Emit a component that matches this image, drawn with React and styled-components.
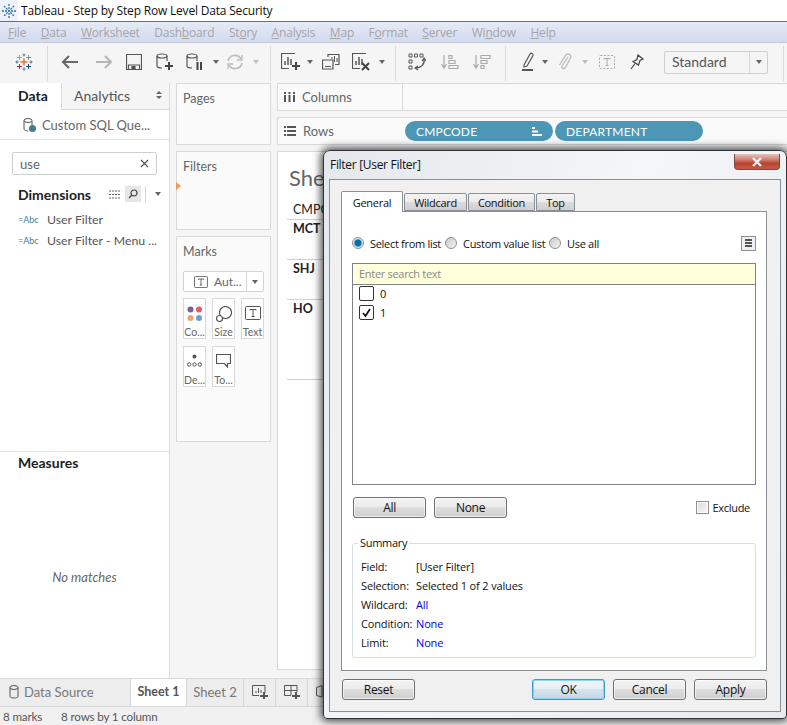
import React from "react";
import styled, { createGlobalStyle } from "styled-components";

const GlobalStyle = createGlobalStyle`
  html, body {
    margin: 0;
    padding: 0;
    background: #fff;
  }
  * {
    box-sizing: border-box;
  }
`;

const chrome = `"Lato", "Open Sans", sans-serif`;
const win = `"Open Sans", "Noto Sans", sans-serif`;

const Page = styled.div`
  position: relative;
  width: 787px;
  height: 725px;
  overflow: hidden;
  display: flex;
  flex-direction: column;
  background: #f5f5f5;
  font-family: ${chrome};
  font-size: 12px;
  color: #555;
`;

/* window title + menu */
const TitleBar = styled.div`
  height: 22px;
  flex: none;
  display: flex;
  align-items: center;
  gap: 3px;
  background: #fff;
  border-bottom: 1px solid #6f6f6f;
  font-family: ${win};
  font-size: 12px;
  letter-spacing: -0.19px;
  color: #111;
`;

const AppIcon = styled.div`
  width: 18px;
  height: 21px;
  display: flex;
  align-items: center;
  justify-content: center;
  background: #eef3f9;
`;

const MenuBar = styled.div`
  height: 21px;
  flex: none;
  display: flex;
  align-items: center;
  gap: 14.5px;
  padding: 1px 0 0 8px;
  background: linear-gradient(#e6eaf6, #d2daf0);
  border-bottom: 1px solid #c4c9d6;
  font-family: ${win};
  font-size: 12px;
  letter-spacing: -0.18px;
  color: #a5a5a5;

  u {
    text-underline-offset: 1px;
  }
`;

const Toolbar = styled.div`
  height: 40px;
  flex: none;
  display: flex;
  align-items: center;
  background: #f5f5f5;
`;

const Tool = styled.div`
  width: ${(p) => p.$w}px;
  height: 24px;
  flex: none;
  margin-top: -2px;
  display: flex;
  align-items: center;
  justify-content: center;
`;

const ToolSep = styled.div`
  width: 1px;
  height: 35px;
  flex: none;
  background: #d9d9d9;
`;

const Caret = styled.span`
  width: 0;
  height: 0;
  flex: none;
  border-left: 3.5px solid transparent;
  border-right: 3.5px solid transparent;
  border-top: 4px solid ${(p) => p.$color || "#666"};
`;

const ViewSelect = styled.div`
  width: 104px;
  height: 23px;
  flex: none;
  margin: -2px 0 0 14px;
  display: flex;
  align-items: center;
  border: 1px solid #cfcfcf;
  border-radius: 2px;
  font-size: 14px;
  color: #555;
`;

const ViewLabel = styled.span`
  flex: 1;
  padding: 0 0 1px 7px;
`;

const CaretBox = styled.span`
  width: ${(p) => p.$w || 18}px;
  height: 100%;
  display: flex;
  align-items: center;
  justify-content: center;
  border-left: 1px solid #d6d6d6;
`;

const Workspace = styled.div`
  flex: 1;
  min-height: 0;
  display: flex;
`;

/* left data pane */
const DataPane = styled.div`
  width: 170px;
  flex: none;
  display: flex;
  flex-direction: column;
  background: #fff;
  border-right: 1px solid #d9d9d9;
`;

const PaneTabs = styled.div`
  height: 27px;
  flex: none;
  display: flex;
`;

const DataTab = styled.div`
  width: 61px;
  padding: 4px 0 0 18px;
  font-size: 14px;
  font-weight: 700;
  color: #222;
`;

const AnalyticsTab = styled.div`
  flex: 1;
  display: flex;
  align-items: center;
  justify-content: space-between;
  padding: 0 7px 2px 12px;
  background: #f5f5f5;
  border-left: 1px solid #d9d9d9;
  border-bottom: 1px solid #d9d9d9;
  font-size: 14px;
  color: #555;
`;

const UpDown = styled.span`
  display: flex;
  flex-direction: column;
  gap: 2px;

  &::before,
  &::after {
    content: "";
    border-left: 3px solid transparent;
    border-right: 3px solid transparent;
  }
  &::before {
    border-bottom: 3px solid #666;
  }
  &::after {
    border-top: 3px solid #666;
  }
`;

const SourceRow = styled.div`
  height: 30px;
  flex: none;
  display: flex;
  align-items: center;
  gap: 6px;
  padding-left: 23px;
  border-bottom: 1px solid #e3e3e3;
  font-size: 13px;
  color: #666;
`;

const SearchBox = styled.div`
  height: 23px;
  flex: none;
  margin: 12px 12px 0;
  padding: 0 7px;
  display: flex;
  align-items: center;
  justify-content: space-between;
  border: 1px solid #cfcfcf;
  border-radius: 2px;
  font-size: 13px;
  color: #666;
`;

const DimHeader = styled.div`
  height: 22px;
  flex: none;
  margin: 8px 0 4px;
  padding-left: 18px;
  display: flex;
  align-items: center;
  font-size: 14px;
  font-weight: 700;
  color: #222;
`;

const DimTools = styled.div`
  margin-left: auto;
  display: flex;
  align-items: center;
  gap: 4px;
  padding-right: 8px;
`;

const DimButton = styled.span`
  width: 16px;
  height: 16px;
  display: flex;
  align-items: center;
  justify-content: center;
  background: ${(p) => (p.$active ? "#e6e6e6" : "transparent")};
`;

const DimSep = styled.span`
  width: 1px;
  height: 17px;
  margin: 0 5px 0 0;
  background: #d5d5d5;
`;

const FieldRow = styled.div`
  height: 21px;
  flex: none;
  display: flex;
  align-items: center;
  padding-left: 18px;
  white-space: nowrap;
  font-size: 12.3px;
  color: #555;
`;

const FieldType = styled.span`
  width: 29px;
  flex: none;
  font-size: 9px;
  color: #3e7d92;
`;

const MeasuresPane = styled.div`
  flex: 1;
  margin-top: 200px;
  display: flex;
  flex-direction: column;
  border-top: 1px solid #e3e3e3;
  padding-top: 2px;
`;

const MeasuresTitle = styled.div`
  padding-left: 18px;
  font-size: 14px;
  font-weight: 700;
  color: #222;
`;

const NoMatches = styled.div`
  margin-top: 98px;
  text-align: center;
  font-style: italic;
  font-size: 13px;
  color: #666;
`;

/* pages / filters / marks */
const CardColumn = styled.div`
  width: 107px;
  flex: none;
  display: flex;
  flex-direction: column;
  gap: 6px;
  padding: 0 6px;
`;

const Card = styled.div`
  height: ${(p) => p.$h}px;
  flex: none;
  position: relative;
  padding: 7px 6px;
  background: #fafafa;
  border: 1px solid #d9d9d9;
  font-size: 12.5px;
  color: #666;
`;

const DropMarker = styled.span`
  position: absolute;
  left: -1px;
  top: 30px;
  border-left: 5px solid #ea9a5c;
  border-top: 4px solid transparent;
  border-bottom: 4px solid transparent;
`;

const MarkSelect = styled.div`
  height: 21px;
  margin-top: 12px;
  display: flex;
  align-items: center;
  background: #fff;
  border: 1px solid #d4d4d4;
  border-radius: 2px;
  font-size: 12px;
  color: #666;
`;

const MarkLabel = styled.span`
  flex: 1;
  display: flex;
  align-items: center;
  gap: 6px;
  padding-left: 10px;
`;

const MarkGrid = styled.div`
  margin-top: 6px;
  display: grid;
  grid-template-columns: repeat(3, 23px);
  grid-auto-rows: 41px;
  gap: 7px 6px;
`;

const MarkTile = styled.div`
  display: flex;
  flex-direction: column;
  align-items: center;
  justify-content: space-between;
  padding: 7px 0 0;
  background: #fff;
  border: 1px solid #d9d9d9;
  font-size: 10.5px;
  color: #666;
`;

/* shelves + view */
const ViewColumn = styled.div`
  flex: 1;
  min-width: 0;
  display: flex;
  flex-direction: column;
  gap: 6px;
  padding-bottom: 8px;
`;

const Shelf = styled.div`
  height: 28px;
  flex: none;
  display: flex;
  align-items: center;
  background: #fafafa;
  border: 1px solid #d9d9d9;
  border-right: 0;
`;

const ShelfLabel = styled.div`
  width: 125px;
  height: 100%;
  flex: none;
  display: flex;
  align-items: center;
  gap: 7px;
  padding: 0 0 1px 6px;
  font-size: 13px;
  color: #666;
  border-right: ${(p) => (p.$split ? "1px solid #d9d9d9" : "0")};
`;

const Pill = styled.div`
  width: ${(p) => p.$w}px;
  height: 20px;
  flex: none;
  margin-right: 2px;
  display: flex;
  align-items: center;
  justify-content: space-between;
  padding: 0 11px;
  background: #4b97b5;
  border-radius: 10px;
  font-size: 12px;
  letter-spacing: 0.2px;
  color: #fff;
`;

const Pills = styled.div`
  display: flex;
  margin-left: 2px;
`;

const Sheet = styled.div`
  flex: 1;
  padding: 12px 0 0 9px;
  background: #fff;
  border: 1px solid #d9d9d9;
  border-right: 0;
`;

const SheetTitle = styled.div`
  height: 27px;
  padding-left: 2px;
  font-size: 22px;
  color: #666;
`;

const SheetRow = styled.div`
  height: ${(p) => p.$h}px;
  padding: ${(p) => (p.$head ? "11px" : "1px")} 0 0 6px;
  border-bottom: 1px solid #cfcfcf;
  font-size: 12.5px;
  font-weight: ${(p) => (p.$head ? 400 : 700)};
  color: #222;
`;

/* bottom tabs */
const TabStrip = styled.div`
  height: 29px;
  flex: none;
  display: flex;
  background: #ededed;
  border-top: 1px solid #d9d9d9;
  border-bottom: 1px solid #d9d9d9;
`;

const SheetTab = styled.div`
  width: ${(p) => p.$w}px;
  flex: none;
  display: flex;
  align-items: center;
  justify-content: ${(p) => (p.$left ? "flex-start" : "center")};
  gap: 5px;
  padding: 0 0 2px ${(p) => (p.$left ? "9px" : 0)};
  background: ${(p) => (p.$active ? "#fff" : "transparent")};
  border-right: 1px solid #d4d4d4;
  font-size: ${(p) => (p.$active ? 12.5 : 13)}px;
  font-weight: ${(p) => (p.$active ? 700 : 400)};
  color: ${(p) => (p.$active ? "#555" : "#777")};
`;

const StatusBar = styled.div`
  height: 18px;
  flex: none;
  display: flex;
  align-items: center;
  gap: 19px;
  padding: 1px 0 0 3px;
  background: #f0f0f0;
  font-size: 11.6px;
  letter-spacing: -0.15px;
  color: #555;
`;

/* filter dialog, floats over the workbook */
const Dialog = styled.div`
  position: absolute;
  left: 323px;
  top: 150px;
  width: 464px;
  height: 569px;
  padding: 28px 5px 6px;
  display: flex;
  flex-direction: column;
  background: linear-gradient(115deg, #e4e8ec, #f4f6f8 45%, #e7ebee);
  border: 1px solid #2f3338;
  border-radius: 7px 7px 4px 4px;
  box-shadow: 0 0 9px 2px rgba(0, 0, 0, 0.75);
  font-family: ${win};
  font-size: 11px;
  letter-spacing: -0.3px;
  color: #111;
`;

const DialogTitle = styled.div`
  position: absolute;
  left: 6px;
  top: 5px;
  font-size: 12px;
`;

const CloseButton = styled.div`
  position: absolute;
  right: 6px;
  top: 3px;
  width: 46px;
  height: 16px;
  display: flex;
  align-items: center;
  justify-content: center;
  background: linear-gradient(#e3c4bf, #d07a6c 40%, #b8432f 62%, #c65b4b);
  border: 1px solid #7a4a44;
  border-top: 0;
  border-radius: 0 0 4px 4px;
`;

const DialogBody = styled.div`
  flex: 1;
  min-height: 0;
  padding: 11px 13px 0 11px;
  display: flex;
  flex-direction: column;
  background: #f0f0f0;
  border: 1px solid #8b9097;
`;

const TabRow = styled.div`
  height: 20px;
  flex: none;
  display: flex;
  align-items: flex-end;
  gap: 1px;
  position: relative;
  z-index: 1;
`;

const DlgTab = styled.div`
  width: ${(p) => p.$w}px;
  height: ${(p) => (p.$active ? 21 : 18)}px;
  margin-bottom: ${(p) => (p.$active ? -1 : 0)}px;
  display: flex;
  align-items: center;
  justify-content: center;
  background: ${(p) =>
    p.$active ? "#fff" : "linear-gradient(#f3f3f3, #ebebeb 50%, #dcdcdc 50%, #cfcfcf)"};
  border: 1px solid #8b9097;
  border-bottom: ${(p) => (p.$active ? "0" : "1px solid #8b9097")};
  border-radius: 2px 2px 0 0;
`;

const TabPanel = styled.div`
  height: 460px;
  flex: none;
  padding: 23px 10px 0;
  background: #fff;
  border: 1px solid #8b9097;
`;

const RadioRow = styled.div`
  height: 16px;
  display: flex;
  align-items: center;
`;

const RadioOption = styled.label`
  width: ${(p) => p.$w}px;
  flex: none;
  display: flex;
  align-items: center;
  gap: 6px;
  white-space: nowrap;
`;

const RadioDot = styled.span`
  width: 12px;
  height: 12px;
  flex: none;
  border-radius: 50%;
  border: 1px solid #8e8f8f;
  background: ${(p) =>
    p.$on
      ? "radial-gradient(circle, #0a6fa8 0 3px, #9fd0ea 4px, #f0f0f0 5px)"
      : "linear-gradient(135deg, #c9c9c9, #f4f4f4)"};
`;

const MenuBtn = styled.div`
  width: 15px;
  height: 15px;
  margin-left: auto;
  display: flex;
  flex-direction: column;
  align-items: center;
  justify-content: center;
  gap: 1px;
  background: #f0f0f0;
  border: 1px solid #8b9097;

  span {
    width: 7px;
    height: 2px;
    background: #555;
  }
`;

const ValueList = styled.div`
  height: 222px;
  margin-top: 12px;
  border: 1px solid #7f8388;
`;

const ListSearch = styled.div`
  height: 21px;
  padding: 0 6px 1px;
  display: flex;
  align-items: center;
  background: #ffffdc;
  border-bottom: 1px solid #7f8388;
  color: #888;
`;

const ListItem = styled.div`
  height: 19px;
  display: flex;
  align-items: flex-start;
  gap: 6px;
  padding-left: 6px;
  line-height: 15px;
`;

const ListChecks = styled.div`
  padding-top: 1px;
`;

const CheckBox = styled.span`
  width: 15px;
  height: 15px;
  flex: none;
  display: flex;
  align-items: center;
  justify-content: center;
  background: #fff;
  border: 1px solid #333;
  border-radius: 2px;
`;

const ButtonRow = styled.div`
  display: flex;
  align-items: center;
  gap: 8px;
  margin-top: ${(p) => p.$mt || 0}px;
  padding-left: ${(p) => p.$pl || 0}px;
`;

const DlgButton = styled.div`
  width: 73px;
  height: 21px;
  flex: none;
  display: flex;
  align-items: center;
  justify-content: center;
  font-size: 12px;
  background: ${(p) =>
    p.$primary
      ? "linear-gradient(#f0f7fb, #e6eff5 50%, #d4e2ec 50%, #c6d8e6)"
      : "linear-gradient(#f3f3f3, #ebebeb 50%, #dddddd 50%, #cfcfcf)"};
  border: 1px solid ${(p) => (p.$primary ? "#3c9ad0" : "#707070")};
  border-radius: 3px;
  box-shadow: inset 0 0 0 1px ${(p) => (p.$primary ? "#8fd3f2" : "rgba(255, 255, 255, 0.6)")};
`;

const ExcludeOption = styled.div`
  margin-left: auto;
  margin-right: 6px;
  display: flex;
  align-items: center;
  gap: 4px;
`;

const ExcludeBox = styled.span`
  width: 13px;
  height: 13px;
  background: linear-gradient(135deg, #dcdcdc, #f8f8f8);
  border: 1px solid #8e8f8f;
  box-shadow: inset 0 0 0 1px #fff;
`;

const Summary = styled.fieldset`
  height: 121px;
  margin: 19px 0 0;
  padding: 8px 0 0 8px;
  border: 1px solid #d5dfe5;
  border-radius: 3px;
  min-width: 0;

  legend {
    margin-left: -3px;
    padding: 0 2px;
    line-height: 12px;
  }
`;

const SummaryRow = styled.div`
  height: 19px;
  display: flex;
  align-items: center;
  letter-spacing: -0.15px;
`;

const SummaryKey = styled.span`
  width: 55px;
  flex: none;
`;

const SummaryValue = styled.span`
  color: ${(p) => (p.$link ? "#0000ee" : "#111")};
`;

const DialogFoot = styled.div`
  flex: 1;
  display: flex;
  align-items: center;
  gap: 8px;
  padding: 0 0 3px 1px;
`;

const FootSpacer = styled.div`
  flex: 1;
`;

const Ic = ({ w = 20, h = 20, children }) => (
  <svg width={w} height={h} viewBox={`0 0 ${w} ${h}`} fill="none" stroke="#555" strokeWidth="1.2">
    {children}
  </svg>
);

const Cross = ({ x, y, s, c, sw = 1 }) => (
  <path d={`M${x - s} ${y}H${x + s}M${x} ${y - s}V${y + s}`} stroke={c} strokeWidth={sw} />
);

const SnowIcon = () => (
  <Ic w={14} h={14}>
    <path
      d="M7 0V14M0 7H14M2 2L12 12M12 2L2 12"
      stroke="#2f72a8"
      strokeWidth="1.3"
      strokeDasharray="2 1"
    />
  </Ic>
);

const TableauLogo = () => (
  <Ic w={18} h={18}>
    <Cross x={9} y={9} s={3.5} c="#e8762b" sw={1.5} />
    <Cross x={9} y={2} s={1.5} c="#59879b" />
    <Cross x={9} y={16} s={1.5} c="#4e79a7" />
    <Cross x={2} y={9} s={1.5} c="#5b6591" />
    <Cross x={16} y={9} s={1.5} c="#5b6591" />
    <Cross x={4.5} y={4.5} s={2.5} c="#eb912b" />
    <Cross x={13.5} y={4.5} s={2.5} c="#7099a6" />
    <Cross x={4.5} y={13.5} s={2.5} c="#c72035" />
    <Cross x={13.5} y={13.5} s={2.5} c="#1f447e" />
  </Ic>
);

const Arrow = ({ flip, color }) => (
  <svg width="18" height="16" viewBox="0 0 18 16" fill="none" stroke={color} strokeWidth="2">
    <path d={flip ? "M1 8H16M10 2L16 8L10 14" : "M17 8H2M8 2L2 8L8 14"} />
  </svg>
);

const SaveIcon = () => (
  <Ic w={16} h={16}>
    <path d="M.5.5H15.5V15.5H.5Z" />
    <path d="M2.5 15V11H13.5V15" />
    <path d="M6 15V12.5H9V15Z" fill="#555" />
  </Ic>
);

const Cylinder = ({ children }) => (
  <Ic w={18} h={18}>
    <ellipse cx="6" cy="3" rx="5" ry="2" />
    <path d="M1 3V13C1 14.5 3 15 6 15M11 3V8" />
    {children}
  </Ic>
);

const PlusMark = ({ x = 13, y = 13, s = 4 }) => (
  <path d={`M${x - s} ${y}H${x + s}M${x} ${y - s}V${y + s}`} stroke="#444" strokeWidth="2" />
);

const RefreshIcon = () => (
  <Ic w={18} h={18}>
    <path d="M2 8A7 7 0 0 1 15 6M16 10A7 7 0 0 1 3 12" stroke="#bdbdbd" strokeWidth="1.6" />
    <path d="M16 2V7H11M2 16V11H7" stroke="#bdbdbd" strokeWidth="1.4" />
  </Ic>
);

const ChartBox = ({ children }) => (
  <Ic w={20} h={18}>
    <path d="M14 .5H.5V15.5H8" />
    <path d="M4 12V8M7 12V4M10 12V6" strokeWidth="1.5" />
    {children}
  </Ic>
);

const DuplicateIcon = () => (
  <Ic w={18} h={16}>
    <path d="M6 3V.5H17V10.5H13" />
    <path d="M.5 6H11V15H.5Z" fill="#f5f5f5" />
    <path d="M10 5V3M12.5 8V2M15 8V4" strokeWidth="1" />
    <path d="M3 12.5H9" strokeWidth="1" />
  </Ic>
);

const SwapIcon = () => (
  <Ic w={18} h={18}>
    <path d="M1 1H4V4H1ZM6.5 1H9.5V4H6.5ZM12 1H15V4H12ZM1 7H4V10H1ZM1 13H4V16H1Z" strokeWidth="1" />
    <path d="M16 6C17 11 13 15 8 15" strokeWidth="1.4" />
    <path d="M14 8L16 5L18 8M10 13L7 15L10 17" strokeWidth="1.2" />
  </Ic>
);

const SortIcon = ({ desc }) => (
  <svg width="18" height="16" viewBox="0 0 18 16" fill="none" stroke="#aaa" strokeWidth="1.2">
    <path d="M3 1V13M.5 10L3 14L5.5 10" />
    {desc ? (
      <path d="M8 1.5H17V4.5H8ZM8 6.5H14V9.5H8ZM8 11.5H11V14.5H8Z" />
    ) : (
      <path d="M8 1.5H11V4.5H8ZM8 6.5H14V9.5H8ZM8 11.5H17V14.5H8Z" />
    )}
  </svg>
);

const HighlightIcon = () => (
  <Ic w={14} h={20}>
    <path d="M3 13L9 2C10 .5 12.5 1.5 12 3.5L6 14L3 15Z" />
    <path d="M1 18H12" stroke="#555" strokeWidth="2" />
  </Ic>
);

const ClipIcon = () => (
  <svg width="14" height="18" viewBox="0 0 14 18" fill="none" stroke="#bbb" strokeWidth="1.3">
    <path d="M10 4L4 13C3 15.5 6 16.5 7.5 14.5L12.5 5C14 1.5 9.5 -.5 7.5 2.5L1.5 12" />
  </svg>
);

const TextIcon = ({ dashed, size = 16, color = "#555" }) => (
  <svg width={size} height={size - 2} viewBox="0 0 16 14" fill="none" stroke={color}>
    <rect x=".5" y=".5" width="15" height="13" rx="1" strokeDasharray={dashed ? "2 1.5" : "none"} />
    <path d="M5 4.5V3.5H11V4.5M8 3.5V10.5M6.5 10.5H9.5" />
  </svg>
);

const PinIcon = () => (
  <Ic w={14} h={16}>
    <path d="M8 1L13 5L10 6.5L8.5 11L3 7.5L7 5.5Z" stroke="#444" />
    <path d="M5 9.5L1 15" stroke="#444" />
  </Ic>
);

const TipIcon = () => (
  <Ic w={15} h={14}>
    <path d="M.5.5H14.5V9.5H11.5V13L8.5 9.5H.5Z" />
  </Ic>
);

const ColorDots = () => (
  <svg width="16" height="16" viewBox="0 0 16 16">
    <circle cx="3.5" cy="3.5" r="3" fill="#7b5f94" />
    <circle cx="12" cy="3.5" r="3" fill="#e8586d" />
    <circle cx="3.5" cy="12" r="3" fill="#eda36f" />
    <circle cx="12" cy="12" r="3" fill="#6f9fd0" />
  </svg>
);

const SizeIcon = () => (
  <Ic w={16} h={16}>
    <circle cx="9.5" cy="6.5" r="6" />
    <circle cx="3.5" cy="12.5" r="3" fill="#fff" />
  </Ic>
);

const DetailIcon = () => (
  <Ic w={15} h={14}>
    <circle cx="7.5" cy="2.5" r="2" fill="#555" stroke="none" />
    <circle cx="2.2" cy="10.5" r="1.7" strokeWidth="1" />
    <circle cx="7.5" cy="10.5" r="1.7" strokeWidth="1" />
    <circle cx="12.8" cy="10.5" r="1.7" strokeWidth="1" />
  </Ic>
);

const ToolbarRow = () => (
  <Toolbar>
    <Tool $w={47}><TableauLogo /></Tool>
    <ToolSep />
    <Tool $w={44}><Arrow color="#666" /></Tool>
    <Tool $w={24}><Arrow flip color="#b5b5b5" /></Tool>
    <Tool $w={36}><SaveIcon /></Tool>
    <Tool $w={26}><Cylinder><PlusMark /></Cylinder></Tool>
    <Tool $w={34}>
      <Cylinder>
        <path d="M11.5 9V17M15 9V17" stroke="#444" strokeWidth="2" />
      </Cylinder>
    </Tool>
    <Tool $w={8}><Caret /></Tool>
    <Tool $w={30}><RefreshIcon /></Tool>
    <Tool $w={12}><Caret $color="#bbb" /></Tool>
    <Tool $w={8} />
    <ToolSep />
    <Tool $w={3} />
    <Tool $w={34}><ChartBox><PlusMark x={15} y={13} /></ChartBox></Tool>
    <Tool $w={4}><Caret /></Tool>
    <Tool $w={38}><DuplicateIcon /></Tool>
    <Tool $w={24}>
      <ChartBox>
        <path d="M10 10L17 17M17 10L10 17" stroke="#444" strokeWidth="2" />
      </ChartBox>
    </Tool>
    <Tool $w={16}><Caret /></Tool>
    <Tool $w={5} />
    <ToolSep />
    <Tool $w={42}><SwapIcon /></Tool>
    <Tool $w={24}><SortIcon /></Tool>
    <Tool $w={40}><SortIcon desc /></Tool>
    <Tool $w={3} />
    <ToolSep />
    <Tool $w={10} />
    <Tool $w={24}><HighlightIcon /></Tool>
    <Tool $w={10}><Caret /></Tool>
    <Tool $w={30}><ClipIcon /></Tool>
    <Tool $w={10}><Caret $color="#bbb" /></Tool>
    <Tool $w={34}><TextIcon dashed color="#aaa" /></Tool>
    <Tool $w={26}><PinIcon /></Tool>
    <ViewSelect>
      <ViewLabel>Standard</ViewLabel>
      <CaretBox><Caret /></CaretBox>
    </ViewSelect>
    <Tool $w={15} />
    <ToolSep />
  </Toolbar>
);

const menus = [
  ["F", "ile"],
  ["D", "ata"],
  ["W", "orksheet"],
  ["Dash", "b", "oard"],
  ["St", "o", "ry"],
  ["A", "nalysis"],
  ["M", "ap"],
  ["F", "o", "rmat"],
  ["S", "erver"],
  ["Wi", "n", "dow"],
  ["H", "elp"],
];

const MenuItem = ({ parts }) =>
  parts.length === 2 ? (
    <span>
      <u>{parts[0]}</u>
      {parts[1]}
    </span>
  ) : (
    <span>
      {parts[0]}
      <u>{parts[1]}</u>
      {parts[2]}
    </span>
  );

const DataPaneView = () => (
  <DataPane>
    <PaneTabs>
      <DataTab>Data</DataTab>
      <AnalyticsTab>
        Analytics
        <UpDown />
      </AnalyticsTab>
    </PaneTabs>
    <SourceRow>
      <Ic w={13} h={14}>
        <ellipse cx="5" cy="2.5" rx="4" ry="2" strokeWidth="1" />
        <path d="M1 2.5V11C1 12 3 13 5 13M9 3V7" strokeWidth="1" />
        <circle cx="9.5" cy="10.5" r="3.5" fill="#3e7d92" stroke="none" />
      </Ic>
      Custom SQL Que...
    </SourceRow>
    <SearchBox>
      use
      <svg width="9" height="9" viewBox="0 0 9 9" stroke="#555" strokeWidth="1.2">
        <path d="M1 1L8 8M8 1L1 8" />
      </svg>
    </SearchBox>
    <DimHeader>
      Dimensions
      <DimTools>
        <svg width="12" height="9" viewBox="0 0 12 9" stroke="#666" strokeDasharray="2 1">
          <path d="M0 1H12M0 4.5H12M0 8H12" />
        </svg>
        <DimButton $active>
          <svg width="10" height="10" viewBox="0 0 10 10" fill="none" stroke="#444" strokeWidth="1.2">
            <circle cx="6" cy="4" r="3" />
            <path d="M4 6L1 9" />
          </svg>
        </DimButton>
        <DimSep />
        <Caret />
      </DimTools>
    </DimHeader>
    <FieldRow>
      <FieldType>=Abc</FieldType>User Filter
    </FieldRow>
    <FieldRow>
      <FieldType>=Abc</FieldType>User Filter - Menu ...
    </FieldRow>
    <MeasuresPane>
      <MeasuresTitle>Measures</MeasuresTitle>
      <NoMatches>No matches</NoMatches>
    </MeasuresPane>
  </DataPane>
);

const MarksCard = () => (
  <Card $h={206}>
    Marks
    <MarkSelect>
      <MarkLabel>
        <TextIcon size={14} />
        Aut...
      </MarkLabel>
      <CaretBox $w={17}><Caret /></CaretBox>
    </MarkSelect>
    <MarkGrid>
      <MarkTile><ColorDots />Co...</MarkTile>
      <MarkTile><SizeIcon />Size</MarkTile>
      <MarkTile><TextIcon />Text</MarkTile>
      <MarkTile><DetailIcon />De...</MarkTile>
      <MarkTile><TipIcon />To...</MarkTile>
    </MarkGrid>
  </Card>
);

const FilterDialog = () => (
  <Dialog>
    <DialogTitle>Filter [User Filter]</DialogTitle>
    <CloseButton>
      <svg width="12" height="10" viewBox="0 0 12 10" stroke="#f4f4f4" strokeWidth="2.4">
        <path d="M2 1L10 9M10 1L2 9" />
      </svg>
    </CloseButton>
    <DialogBody>
      <TabRow>
        <DlgTab $w={62} $active>General</DlgTab>
        <DlgTab $w={63}>Wildcard</DlgTab>
        <DlgTab $w={67}>Condition</DlgTab>
        <DlgTab $w={39}>Top</DlgTab>
      </TabRow>
      <TabPanel>
        <RadioRow>
          <RadioOption $w={93}><RadioDot $on />Select from list</RadioOption>
          <RadioOption $w={104}><RadioDot />Custom value list</RadioOption>
          <RadioOption $w={60}><RadioDot />Use all</RadioOption>
          <MenuBtn><span /><span /><span /></MenuBtn>
        </RadioRow>
        <ValueList>
          <ListSearch>Enter search text</ListSearch>
          <ListChecks>
            <ListItem><CheckBox />0</ListItem>
            <ListItem>
              <CheckBox>
                <svg width="11" height="11" viewBox="0 0 11 11" fill="none" stroke="#111" strokeWidth="1.7">
                  <path d="M2 6L4.5 9L9 2" />
                </svg>
              </CheckBox>
              1
            </ListItem>
          </ListChecks>
        </ValueList>
        <ButtonRow $mt={12} $pl={1}>
          <DlgButton>All</DlgButton>
          <DlgButton>None</DlgButton>
          <ExcludeOption><ExcludeBox />Exclude</ExcludeOption>
        </ButtonRow>
        <Summary>
          <legend>Summary</legend>
          <SummaryRow><SummaryKey>Field:</SummaryKey><SummaryValue>[User Filter]</SummaryValue></SummaryRow>
          <SummaryRow><SummaryKey>Selection:</SummaryKey><SummaryValue>Selected 1 of 2 values</SummaryValue></SummaryRow>
          <SummaryRow><SummaryKey>Wildcard:</SummaryKey><SummaryValue $link>All</SummaryValue></SummaryRow>
          <SummaryRow><SummaryKey>Condition:</SummaryKey><SummaryValue $link>None</SummaryValue></SummaryRow>
          <SummaryRow><SummaryKey>Limit:</SummaryKey><SummaryValue $link>None</SummaryValue></SummaryRow>
        </Summary>
      </TabPanel>
      <DialogFoot>
        <DlgButton>Reset</DlgButton>
        <FootSpacer />
        <DlgButton $primary>OK</DlgButton>
        <DlgButton>Cancel</DlgButton>
        <DlgButton>Apply</DlgButton>
      </DialogFoot>
    </DialogBody>
  </Dialog>
);

const App = () => (
  <Page>
    <GlobalStyle />
    <TitleBar>
      <AppIcon><SnowIcon /></AppIcon>
      Tableau - Step by Step Row Level Data Security
    </TitleBar>
    <MenuBar>
      {menus.map((m) => (
        <MenuItem key={m.join("")} parts={m} />
      ))}
    </MenuBar>
    <ToolbarRow />
    <Workspace>
      <DataPaneView />
      <CardColumn>
        <Card $h={62}>Pages</Card>
        <Card $h={79}>
          Filters
          <DropMarker />
        </Card>
        <MarksCard />
      </CardColumn>
      <ViewColumn>
        <Shelf>
          <ShelfLabel $split>
            <svg width="11" height="10" viewBox="0 0 11 10" fill="#555">
              <path d="M0 0H2V2H0ZM0 3H2V10H0ZM4.5 0H6.5V2H4.5ZM4.5 3H6.5V10H4.5ZM9 0H11V2H9ZM9 3H11V10H9Z" />
            </svg>
            Columns
          </ShelfLabel>
        </Shelf>
        <Shelf>
          <ShelfLabel>
            <svg width="12" height="10" viewBox="0 0 12 10" fill="#555">
              <path d="M0 0H2V2H0ZM3 0H12V2H3ZM0 4H2V6H0ZM3 4H12V6H3ZM0 8H2V10H0ZM3 8H12V10H3Z" />
            </svg>
            Rows
          </ShelfLabel>
          <Pills>
            <Pill $w={148}>
              CMPCODE
              <svg width="10" height="9" viewBox="0 0 10 9" fill="#fff">
                <path d="M0 0H3V2H0ZM0 3.5H6V5.5H0ZM0 7H10V9H0Z" />
              </svg>
            </Pill>
            <Pill $w={148}>DEPARTMENT</Pill>
          </Pills>
        </Shelf>
        <Sheet>
          <SheetTitle>Sheet 1</SheetTitle>
          <SheetRow $head $h={29}>CMPCODE</SheetRow>
          <SheetRow $h={40}>MCT</SheetRow>
          <SheetRow $h={40}>SHJ</SheetRow>
          <SheetRow $h={80}>HO</SheetRow>
        </Sheet>
      </ViewColumn>
    </Workspace>
    <TabStrip>
      <SheetTab $w={131} $left>
        <Ic w={10} h={14}>
          <ellipse cx="5" cy="2.5" rx="4" ry="2" strokeWidth="1" />
          <path d="M1 2.5V11.5C1 13.5 9 13.5 9 11.5V2.5" strokeWidth="1" />
        </Ic>
        Data Source
      </SheetTab>
      <SheetTab $w={56} $active>Sheet 1</SheetTab>
      <SheetTab $w={57}>Sheet 2</SheetTab>
      <SheetTab $w={32}>
        <Ic w={16} h={14}>
          <path d="M13 8V.5H.5V10.5H7" strokeWidth="1" />
          <path d="M4 8V6M6.5 8V3M9 8V5" strokeWidth="1" />
          <path d="M8 11H16M12 7V14" strokeWidth="2" />
        </Ic>
      </SheetTab>
      <SheetTab $w={32}>
        <Ic w={16} h={14}>
          <path d="M13 7V.5H.5V10.5H7M.5 5.5H13M7 .5V10" strokeWidth="1" />
          <path d="M8 11H16M12 7V14" strokeWidth="2" />
        </Ic>
      </SheetTab>
      <SheetTab $w={32}>
        <Ic w={16} h={14}>
          <path d="M.5 2.5L6 .5V12L.5 10.5Z" strokeWidth="1" />
        </Ic>
      </SheetTab>
    </TabStrip>
    <StatusBar>
      <span>8 marks</span>
      <span>8 rows by 1 column</span>
    </StatusBar>
    <FilterDialog />
  </Page>
);

export default App;
